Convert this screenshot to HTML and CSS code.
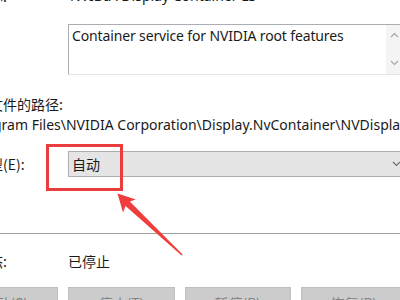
FILE: index.html
```html
<!DOCTYPE html>
<html lang="zh-CN">
<head>
<meta charset="utf-8">
<title>服务属性</title>
<link rel="stylesheet" href="styles.css">
</head>
<body>
<div class="page">
  <div class="dialog">
    <div class="row row-name">
      <div class="label">显示名称:</div>
      <div class="value">NVIDIA Display Container LS</div>
    </div>
    <div class="row row-desc">
      <div class="label">描述:</div>
      <div class="textbox">
        <div class="textbox-text">Container service for NVIDIA root features</div>
        <div class="scrollbar">
          <svg class="sb-arrow" width="9" height="6" viewBox="0 0 9 6"><path d="M1 5 L4.5 1.5 L8 5" fill="none" stroke="#a6a6a6" stroke-width="1.2"/></svg>
          <svg class="sb-arrow" width="9" height="6" viewBox="0 0 9 6"><path d="M1 1 L4.5 4.5 L8 1" fill="none" stroke="#a6a6a6" stroke-width="1.2"/></svg>
        </div>
      </div>
    </div>
    <div class="path-label">可执行文件的路径:</div>
    <div class="path-text">"C:\Program Files\NVIDIA Corporation\Display.NvContainer\NVDisplay.Container.exe" -s NVDisplay.ContainerLocalSystem</div>
    <div class="row row-type">
      <div class="label">启动类型(E):</div>
      <div class="combo">
        <span class="combo-text">自动</span>
        <svg class="combo-arrow" width="9" height="6" viewBox="0 0 9 6"><path d="M1 1 L4.5 4.5 L8 1" fill="none" stroke="#6d6d6d" stroke-width="1.2"/></svg>
      </div>
    </div>
    <div class="separator"></div>
    <div class="row row-status">
      <div class="label">服务状态:</div>
      <div class="value">已停止</div>
    </div>
    <div class="buttons">
      <div class="btn">启动(S)</div>
      <div class="btn">停止(T)</div>
      <div class="btn">暂停(P)</div>
      <div class="btn">恢复(R)</div>
    </div>
  </div>
  <svg class="annotation" width="400" height="300" viewBox="0 0 400 300">
    <rect x="47.5" y="145.5" width="74" height="44" fill="none" stroke="#ec3d3d" stroke-width="3"/>
    <polygon points="117.5,193.5 135.8,199.5 129.8,201.6 182.6,254.6 181.6,255.4 125.6,206 123,212.6" fill="#ef3c3c"/>
  </svg>
</div>
</body>
</html>
```

FILE: styles.css
```css
html, body {
  margin: 0;
  padding: 0;
  background: #ffffff;
}

.page {
  position: relative;
  width: 400px;
  height: 300px;
  overflow: hidden;
  background: #ffffff;
  font-family: "Noto Sans", "Noto Sans CJK SC", sans-serif;
  font-size: 14px;
  color: #1a1a1a;
}

.dialog {
  margin-left: -53px;
  width: 460px;
}

.row {
  display: grid;
  grid-template-columns: 121px 339px;
  align-items: center;
  line-height: 20px;
}

.label {
  white-space: nowrap;
  font-family: "Noto Sans CJK SC", sans-serif;
}

.value {
  white-space: nowrap;
}

.row-name {
  margin-top: -14px;
  height: 20px;
}

.row-name .value {
  padding-left: 2px;
}

.row-desc {
  margin-top: 18px;
  align-items: start;
}

.row-desc .label {
  padding-top: 2px;
}

.textbox {
  height: 49px;
  border: 1px solid #abadb3;
  border-bottom-color: #e3e3e3;
  display: flex;
  width: 334px;
}

.textbox-text {
  flex: 1;
  padding: 2px 3px;
  line-height: 18px;
  white-space: nowrap;
  letter-spacing: -0.14px;
  color: #1a1a1a;
}

.scrollbar {
  width: 17px;
  background: #f4f4f4;
  display: flex;
  flex-direction: column;
  justify-content: space-between;
  align-items: center;
  padding: 7px 0 8px;
}

.path-label {
  margin-top: 19px;
  line-height: 20px;
  font-family: "Noto Sans CJK SC", sans-serif;
}

.path-text {
  margin-top: 1px;
  line-height: 20px;
  white-space: nowrap;
}

.row-type {
  margin-top: 16px;
}

.combo {
  height: 24px;
  background: #e5e5e5;
  border: 1px solid #adadad;
  display: flex;
  align-items: center;
  justify-content: space-between;
  padding: 0 5px 0 3px;
}

.combo-text {
  font-family: "Noto Sans CJK SC", sans-serif;
}

.separator {
  margin-top: 56px;
  height: 1px;
  background: #a0a0a0;
}

.row-status {
  margin-top: 17px;
}

.row-status .value {
  font-family: "Noto Sans CJK SC", sans-serif;
}

.buttons {
  margin-top: 16px;
  padding-left: 5px;
  display: flex;
  gap: 10px;
}

.btn {
  width: 105px;
  height: 29px;
  background: #cccccc;
  border: 1px solid #bfbfbf;
  color: #838383;
  font-family: "Noto Sans CJK SC", sans-serif;
  display: flex;
  align-items: center;
  justify-content: center;
}

.annotation {
  position: absolute;
  left: 0;
  top: 0;
}
```
